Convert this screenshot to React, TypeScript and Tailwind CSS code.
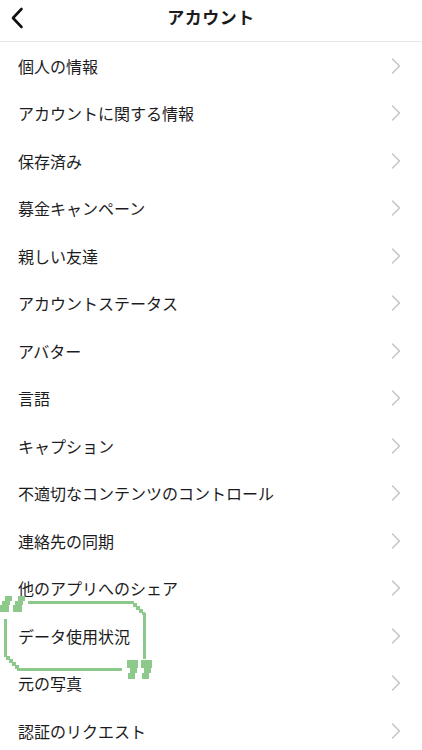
import React from "react";

const items = [
  "個人の情報",
  "アカウントに関する情報",
  "保存済み",
  "募金キャンペーン",
  "親しい友達",
  "アカウントステータス",
  "アバター",
  "言語",
  "キャプション",
  "不適切なコンテンツのコントロール",
  "連絡先の同期",
  "他のアプリへのシェア",
  "データ使用状況",
  "元の写真",
  "認証のリクエスト",
];

function Chevron() {
  return (
    <svg width="10" height="16" viewBox="0 0 10 16" fill="none">
      <path d="M1.5 1 L8.5 8 L1.5 15" stroke="#c5c5c8" strokeWidth="1.5" strokeLinecap="round" strokeLinejoin="round" />
    </svg>
  );
}

function OpenQuote({ x }: { x: number }) {
  const y = 596;
  return (
    <path
      d={`M${x + 5} ${y} H${x + 12} V${y + 5} H${x + 10} V${y + 9} H${x + 9} V${y + 16} H${x} V${y + 9} H${x + 2} V${y + 5} H${x + 5} Z`}
    />
  );
}

function CloseQuote({ x }: { x: number }) {
  const y = 660;
  return (
    <path
      d={`M${x} ${y} H${x + 11} V${y + 8} H${x + 10} V${y + 13} H${x + 8} V${y + 19} H${x + 1} V${y + 13} H${x + 3} V${y + 8} H${x} Z`}
    />
  );
}

function Annotation() {
  return (
    <svg
      className="absolute left-0 top-0 pointer-events-none"
      width="422"
      height="750"
      viewBox="0 0 422 750"
      fill="#8cc98a"
    >
      <OpenQuote x={0} />
      <OpenQuote x={13} />
      {/* top line */}
      <rect x="28" y="601" width="106" height="3" />
      {/* top-right steps */}
      <rect x="133" y="603" width="4" height="4" />
      <rect x="136" y="606" width="4" height="4" />
      <rect x="139" y="609" width="4" height="4" />
      <rect x="142" y="612" width="3" height="3" />
      {/* right vertical */}
      <rect x="143" y="613" width="3" height="46" />
      {/* left vertical */}
      <rect x="4" y="619" width="3" height="38" />
      {/* bottom-left steps */}
      <rect x="6" y="656" width="4" height="4" />
      <rect x="9" y="659" width="4" height="4" />
      <rect x="12" y="662" width="4" height="4" />
      <rect x="15" y="665" width="4" height="4" />
      {/* bottom line */}
      <rect x="17" y="668" width="105" height="3" />
      <CloseQuote x={127} />
      <CloseQuote x={141} />
    </svg>
  );
}

export default function App() {
  return (
    <div
      className="relative w-[422px] h-[750px] overflow-hidden bg-white text-[#1c1c1e]"
      style={{ fontFamily: '"Noto Sans CJK JP", "Noto Sans", sans-serif' }}
    >
      <header className="relative flex items-center justify-center h-[42px] border-b border-[#e8e8e8]">
        <button className="absolute left-[8px] top-[7px] w-[18px] h-[22px] flex items-center justify-center">
          <svg width="14" height="22" viewBox="0 0 14 22" fill="none">
            <path d="M11.5 2 L3 11 L11.5 20" stroke="#111" strokeWidth="2.6" strokeLinecap="round" strokeLinejoin="round" />
          </svg>
        </button>
        <h1 className="text-[17px] font-bold leading-none tracking-[0.5px] -mt-[8px]">アカウント</h1>
      </header>
      <ul>
        {items.map((t) => (
          <li key={t} className="flex items-center justify-between h-[47.5px] pl-[18px] pr-[21px]">
            <span className="text-[16px] leading-none">{t}</span>
            <Chevron />
          </li>
        ))}
      </ul>
      <Annotation />
    </div>
  );
}
